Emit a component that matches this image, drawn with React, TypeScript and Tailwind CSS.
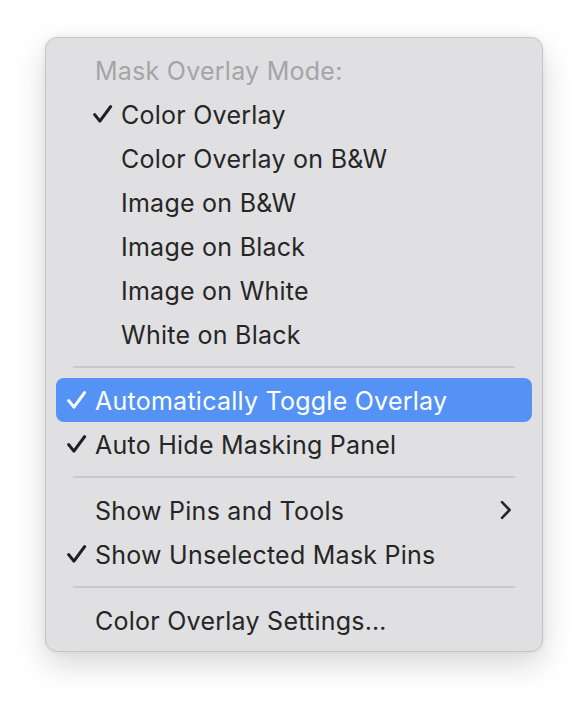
import React from "react";

const Check = ({ white = false }: { white?: boolean }) => (
  <svg width="20" height="18" viewBox="0 0 20 18" className={white ? "text-white" : "text-[#1f1f1f]"}>
    <path d="M1.7 9.6 L6.9 16.1 L17.6 1.7" fill="none" stroke="currentColor" strokeWidth="3.1" strokeLinecap="round" strokeLinejoin="round" />
  </svg>
);

const Chevron = () => (
  <svg width="12" height="20" viewBox="0 0 12 20" className="text-[#262626]">
    <path d="M2 2.2 L9.6 10 L2 17.8" fill="none" stroke="currentColor" strokeWidth="2.6" strokeLinecap="round" strokeLinejoin="round" />
  </svg>
);

type RowProps = {
  label: string;
  checked?: boolean;
  indent?: boolean;
  active?: boolean;
  submenu?: boolean;
};

const Row = ({ label, checked, indent, active, submenu }: RowProps) => (
  <div
    className={`flex h-[44px] items-center rounded-[8px] pr-[20px] ${indent ? "pl-[37px]" : "pl-[11px]"} ${
      active ? "bg-[#5492f5] text-white" : "text-[#262626]"
    }`}
  >
    <div className="flex w-[28px] items-center">{checked ? <Check white={active} /> : null}</div>
    <span className="flex-1 whitespace-nowrap pt-[4px]">{label}</span>
    {submenu ? <Chevron /> : null}
  </div>
);

const Sep = () => (
  <div className="flex h-[22px] items-center px-[17px]">
    <div className="h-[2px] w-full bg-[#c9c9cb]" />
  </div>
);

export default function App() {
  return (
    <div className="h-[706px] w-[588px] bg-white pl-[45px] pt-[37px]" style={{ fontFamily: "Inter, 'Noto Sans', sans-serif" }}>
      <div className="flex h-[615px] w-[498px] flex-col rounded-[12px] border border-[#c4c4c6] bg-[#e0e0e2] px-[10px] pb-[9px] pt-[10px] text-[25px] tracking-[0.25px] shadow-[0_12px_32px_rgba(0,0,0,0.16),0_0_6px_rgba(0,0,0,0.06)]">
        <div className="flex h-[44px] items-center pl-[39px] text-[#a5a5a7]">
          <span className="pt-[4px]">Mask Overlay Mode:</span>
        </div>
        <Row label="Color Overlay" checked indent />
        <Row label="Color Overlay on B&W" indent />
        <Row label="Image on B&W" indent />
        <Row label="Image on Black" indent />
        <Row label="Image on White" indent />
        <Row label="White on Black" indent />
        <Sep />
        <Row label="Automatically Toggle Overlay" checked active />
        <Row label="Auto Hide Masking Panel" checked />
        <Sep />
        <Row label="Show Pins and Tools" submenu />
        <Row label="Show Unselected Mask Pins" checked />
        <Sep />
        <Row label="Color Overlay Settings…" />
      </div>
    </div>
  );
}
